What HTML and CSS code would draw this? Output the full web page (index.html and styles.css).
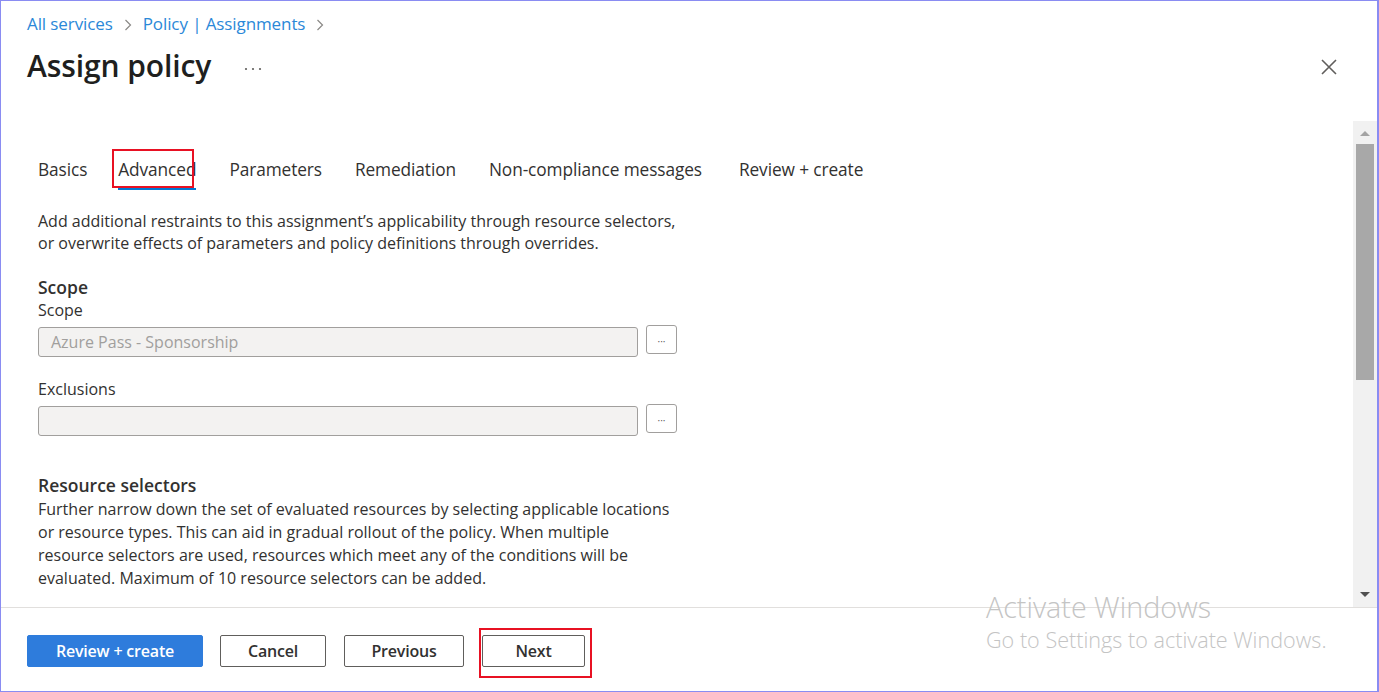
FILE: index.html
```html
<!DOCTYPE html>
<html lang="en">
<head>
<meta charset="utf-8">
<title>Assign policy</title>
<link rel="stylesheet" href="styles.css">
</head>
<body>
<div class="frame">
  <header class="header">
    <nav class="crumbs">
      <a class="crumb">All services</a>
      <svg class="chev" width="8" height="12" viewBox="0 0 8 12"><path d="M1.5 1L6.5 6L1.5 11" stroke="#8a8886" stroke-width="1.2" fill="none"/></svg>
      <a class="crumb">Policy | Assignments</a>
      <svg class="chev" width="8" height="12" viewBox="0 0 8 12"><path d="M1.5 1L6.5 6L1.5 11" stroke="#8a8886" stroke-width="1.2" fill="none"/></svg>
    </nav>
    <div class="title-row">
      <h1 class="title">Assign policy</h1>
      <svg class="more" width="18" height="4" viewBox="0 0 18 4"><circle cx="2" cy="2" r="1.1" fill="#605e5c"/><circle cx="9" cy="2" r="1.1" fill="#605e5c"/><circle cx="16" cy="2" r="1.1" fill="#605e5c"/></svg>
      <span class="spacer"></span>
      <svg class="close" width="16" height="16" viewBox="0 0 16 16"><path d="M1 1L15 15M15 1L1 15" stroke="#605e5c" stroke-width="1.6" fill="none"/></svg>
    </div>
  </header>
  <div class="main">
    <div class="content">
      <div class="tabs">
        <span class="tab first">Basics</span>
        <span class="tab active">Advanced<span class="mark"></span></span>
        <span class="tab">Parameters</span>
        <span class="tab">Remediation</span>
        <span class="tab wide">Non-compliance messages</span>
        <span class="tab">Review + create</span>
      </div>
      <p class="desc">Add additional restraints to this assignment’s applicability through resource selectors,<br>or overwrite effects of parameters and policy definitions through overrides.</p>
      <h2 class="section">Scope</h2>
      <div class="label">Scope</div>
      <div class="field-row">
        <div class="input">Azure Pass - Sponsorship</div>
        <div class="dots-btn">&middot;&middot;&middot;</div>
      </div>
      <div class="label gap">Exclusions</div>
      <div class="field-row">
        <div class="input"></div>
        <div class="dots-btn">&middot;&middot;&middot;</div>
      </div>
      <h2 class="section rs">Resource selectors</h2>
      <p class="para">Further narrow down the set of evaluated resources by selecting applicable locations<br>or resource types. This can aid in gradual rollout of the policy. When multiple<br>resource selectors are used, resources which meet any of the conditions will be<br>evaluated. Maximum of 10 resource selectors can be added.</p>
    </div>
    <div class="scrollbar">
      <div class="arrow up"></div>
      <div class="thumb"></div>
      <div class="track-rest"></div>
      <div class="arrow down"></div>
    </div>
    <span class="cursor"></span>
  </div>
  <footer class="footer">
    <button class="btn primary">Review + create</button>
    <button class="btn cancel">Cancel</button>
    <button class="btn prev">Previous</button>
    <button class="btn next">Next<span class="mark next-mark"></span></button>
    <div class="watermark">
      <div class="wm1">Activate Windows</div>
      <div class="wm2">Go to Settings to activate Windows.</div>
    </div>
  </footer>
</div>
</body>
</html>
```
FILE: styles.css
```css
* { box-sizing: border-box; }
html, body { margin: 0; padding: 0; background: #fff; }
body { font-family: "Open Sans", "Noto Sans", sans-serif; color: #323130; }

.frame {
  width: 1379px;
  height: 692px;
  border: 1px solid #8a8cf2;
  border-right-width: 2px;
  display: flex;
  flex-direction: column;
  overflow: hidden;
}

.header { height: 119px; padding: 12px 0 0 26px; }
.crumbs { display: flex; align-items: center; font-size: 17px; line-height: 22px; letter-spacing: -0.1px; }
.crumb { color: #2b88d8; }
.chev { margin: 1px 11px 0 11px; }
.title-row { display: flex; align-items: center; margin-top: 12px; padding-right: 40px; }
.title { margin: 0; font-size: 30px; font-weight: 600; line-height: 38px; color: #201f1e; letter-spacing: -0.1px; }
.more { margin-left: 33px; margin-top: 6px; }
.spacer { flex: 1; }
.close { margin-top: 2px; }

.main { flex: 1; display: flex; min-height: 0; position: relative; }
.content { flex: 1; padding: 38px 0 0 37px; position: relative; }
.tabs { display: flex; font-size: 17.3px; line-height: 24px; letter-spacing: -0.1px; }
.tab { position: relative; padding-bottom: 8px; margin-right: 33px; color: #323130; }
.tab.first { margin-right: 31px; }
.tab.wide { margin-right: 37px; }
.tab.active { border-bottom: 2px solid #0078d4; padding-bottom: 6px; }
.mark { position: absolute; border: 2px solid #e81123; pointer-events: none; }
.tab .mark { left: -6px; top: -9px; width: 82px; height: 39px; }

.desc { margin: 20px 0 0 0; font-size: 16px; line-height: 22px; }
.section { margin: 21px 0 0 0; font-size: 17.5px; line-height: 24px; font-weight: 600; }
.label { font-size: 16px; line-height: 22px; margin-top: 0; }
.label.gap { margin-top: 21px; }
.field-row { display: flex; align-items: flex-start; margin-top: 6px; }
.input {
  width: 600px; height: 30px;
  background: #f3f2f1; border: 1px solid #a19f9d; border-radius: 3px;
  color: #a19f9d; font-size: 16px; line-height: 28px; padding-left: 12px;
}
.dots-btn {
  width: 31px; height: 29px; margin-left: 8px; margin-top: -2px;
  border: 1px solid #a19f9d; border-radius: 3px; background: #fff;
  font-size: 10px; color: #605e5c; text-align: center; line-height: 30px;
}
.section.rs { margin-top: 37px; }
.para { margin: 1px 0 0 0; font-size: 16px; line-height: 23px; }

.scrollbar { width: 24px; margin-top: 1px; background: #f1f1f1; display: flex; flex-direction: column; align-items: center; }
.arrow { width: 0; height: 0; border-left: 5px solid transparent; border-right: 5px solid transparent; }
.arrow.up { border-bottom: 5px solid #a3a3a3; margin: 10px 0 8px; }
.thumb { width: 18px; height: 236px; background: #a8a8a8; }
.track-rest { flex: 1; }
.arrow.down { border-top: 5px solid #505050; margin: 0 0 10px; }
.cursor { position: absolute; right: -2px; top: 211px; width: 2px; height: 25px; background: #1a1a2a; }

.footer {
  height: 84px; border-top: 1px solid #e1dfdd; display: flex; align-items: flex-start;
  padding: 27px 0 0 26px; position: relative;
}
.btn {
  height: 32px; font-family: "Open Sans", "Noto Sans", sans-serif; font-size: 16px; font-weight: 600;
  letter-spacing: -0.2px; border-radius: 2px; background: #fff; color: #323130; border: 1px solid #605e5c;
  padding: 0; position: relative;
}
.btn.primary { width: 176px; background: #2e7cdc; border-color: #2e7cdc; color: #fff; }
.btn.cancel { width: 106px; margin-left: 17px; }
.btn.prev { width: 120px; margin-left: 18px; }
.btn.next { width: 103px; margin-left: 18px; }
.next-mark { left: -4px; top: -8px; width: 113px; height: 50px; }

.watermark { position: absolute; left: 985px; top: -17px; color: #c4c4c4; }
.wm1 { font-size: 28.7px; line-height: 32px; font-weight: 300; }
.wm2 { font-size: 21.6px; line-height: 28px; margin-top: 3px; font-weight: 300; }
```
